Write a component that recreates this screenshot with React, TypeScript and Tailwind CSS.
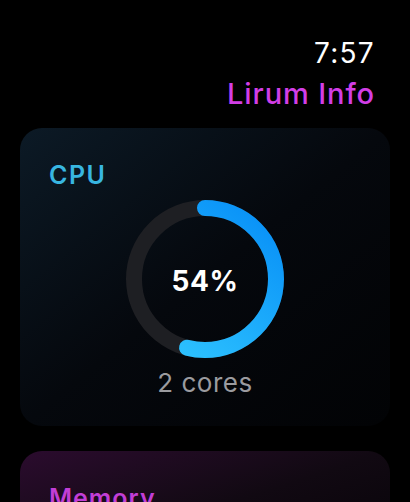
import React from "react"

const font = { fontFamily: "Inter, 'Noto Sans', sans-serif" }

function Ring({ value }: { value: number }) {
  const r = 71
  const c = 2 * Math.PI * r
  return (
    <div className="relative w-[158px] h-[158px]">
      <svg width="158" height="158" viewBox="0 0 158 158" className="-rotate-90">
        <defs>
          <linearGradient id="cpuGrad" x1="1" y1="0.9" x2="0" y2="0.1">
            <stop offset="0%" stopColor="#0890f7" />
            <stop offset="100%" stopColor="#30c6ff" />
          </linearGradient>
        </defs>
        <circle cx="79" cy="79" r={r} fill="none" stroke="#1e1f23" strokeWidth="16" />
        <circle
          cx="79"
          cy="79"
          r={r}
          fill="none"
          stroke="url(#cpuGrad)"
          strokeWidth="16"
          strokeLinecap="round"
          strokeDasharray={`${c * value} ${c}`}
        />
      </svg>
      <div className="absolute inset-0 flex items-center justify-center pt-[3px]">
        <span className="text-[28px] leading-[34px] font-bold tracking-[0.5px] text-white">54%</span>
      </div>
    </div>
  )
}

export default function App() {
  return (
    <div className="w-[410px] h-[502px] overflow-hidden bg-black" style={font}>
      <div className="flex flex-col items-end pr-[35px] pt-[36px] gap-[7px]">
        <span className="text-[28px] leading-[34px] font-normal tracking-[1.3px] text-white">7:57</span>
        <span className="text-[29px] leading-[34px] font-medium tracking-[0.9px] text-[#d23ee6]">Lirum Info</span>
      </div>

      <div className="mx-5 mt-[17px] rounded-[22px] bg-gradient-to-br from-[#0c1a26] via-[#05080d] to-[#020305] pt-[32px] pb-[28px]">
        <div className="pl-[29px] text-[25px] leading-[30px] font-semibold tracking-[1.5px] text-[#38b6e1]">CPU</div>
        <div className="flex flex-col items-center mt-[10px]">
          <Ring value={0.54} />
          <span className="mt-[10px] text-[26px] leading-[30px] tracking-[0.5px] text-[#9b9b9f]">2 cores</span>
        </div>
      </div>

      <div className="mx-5 mt-[25px] rounded-[22px] bg-gradient-to-br from-[#2b0b2e] via-[#110912] to-[#060407] pt-[32px] h-[120px]">
        <div className="pl-[29px] text-[25px] leading-[30px] font-semibold tracking-[1px] text-[#c23ed6]">Memory</div>
      </div>
    </div>
  )
}
